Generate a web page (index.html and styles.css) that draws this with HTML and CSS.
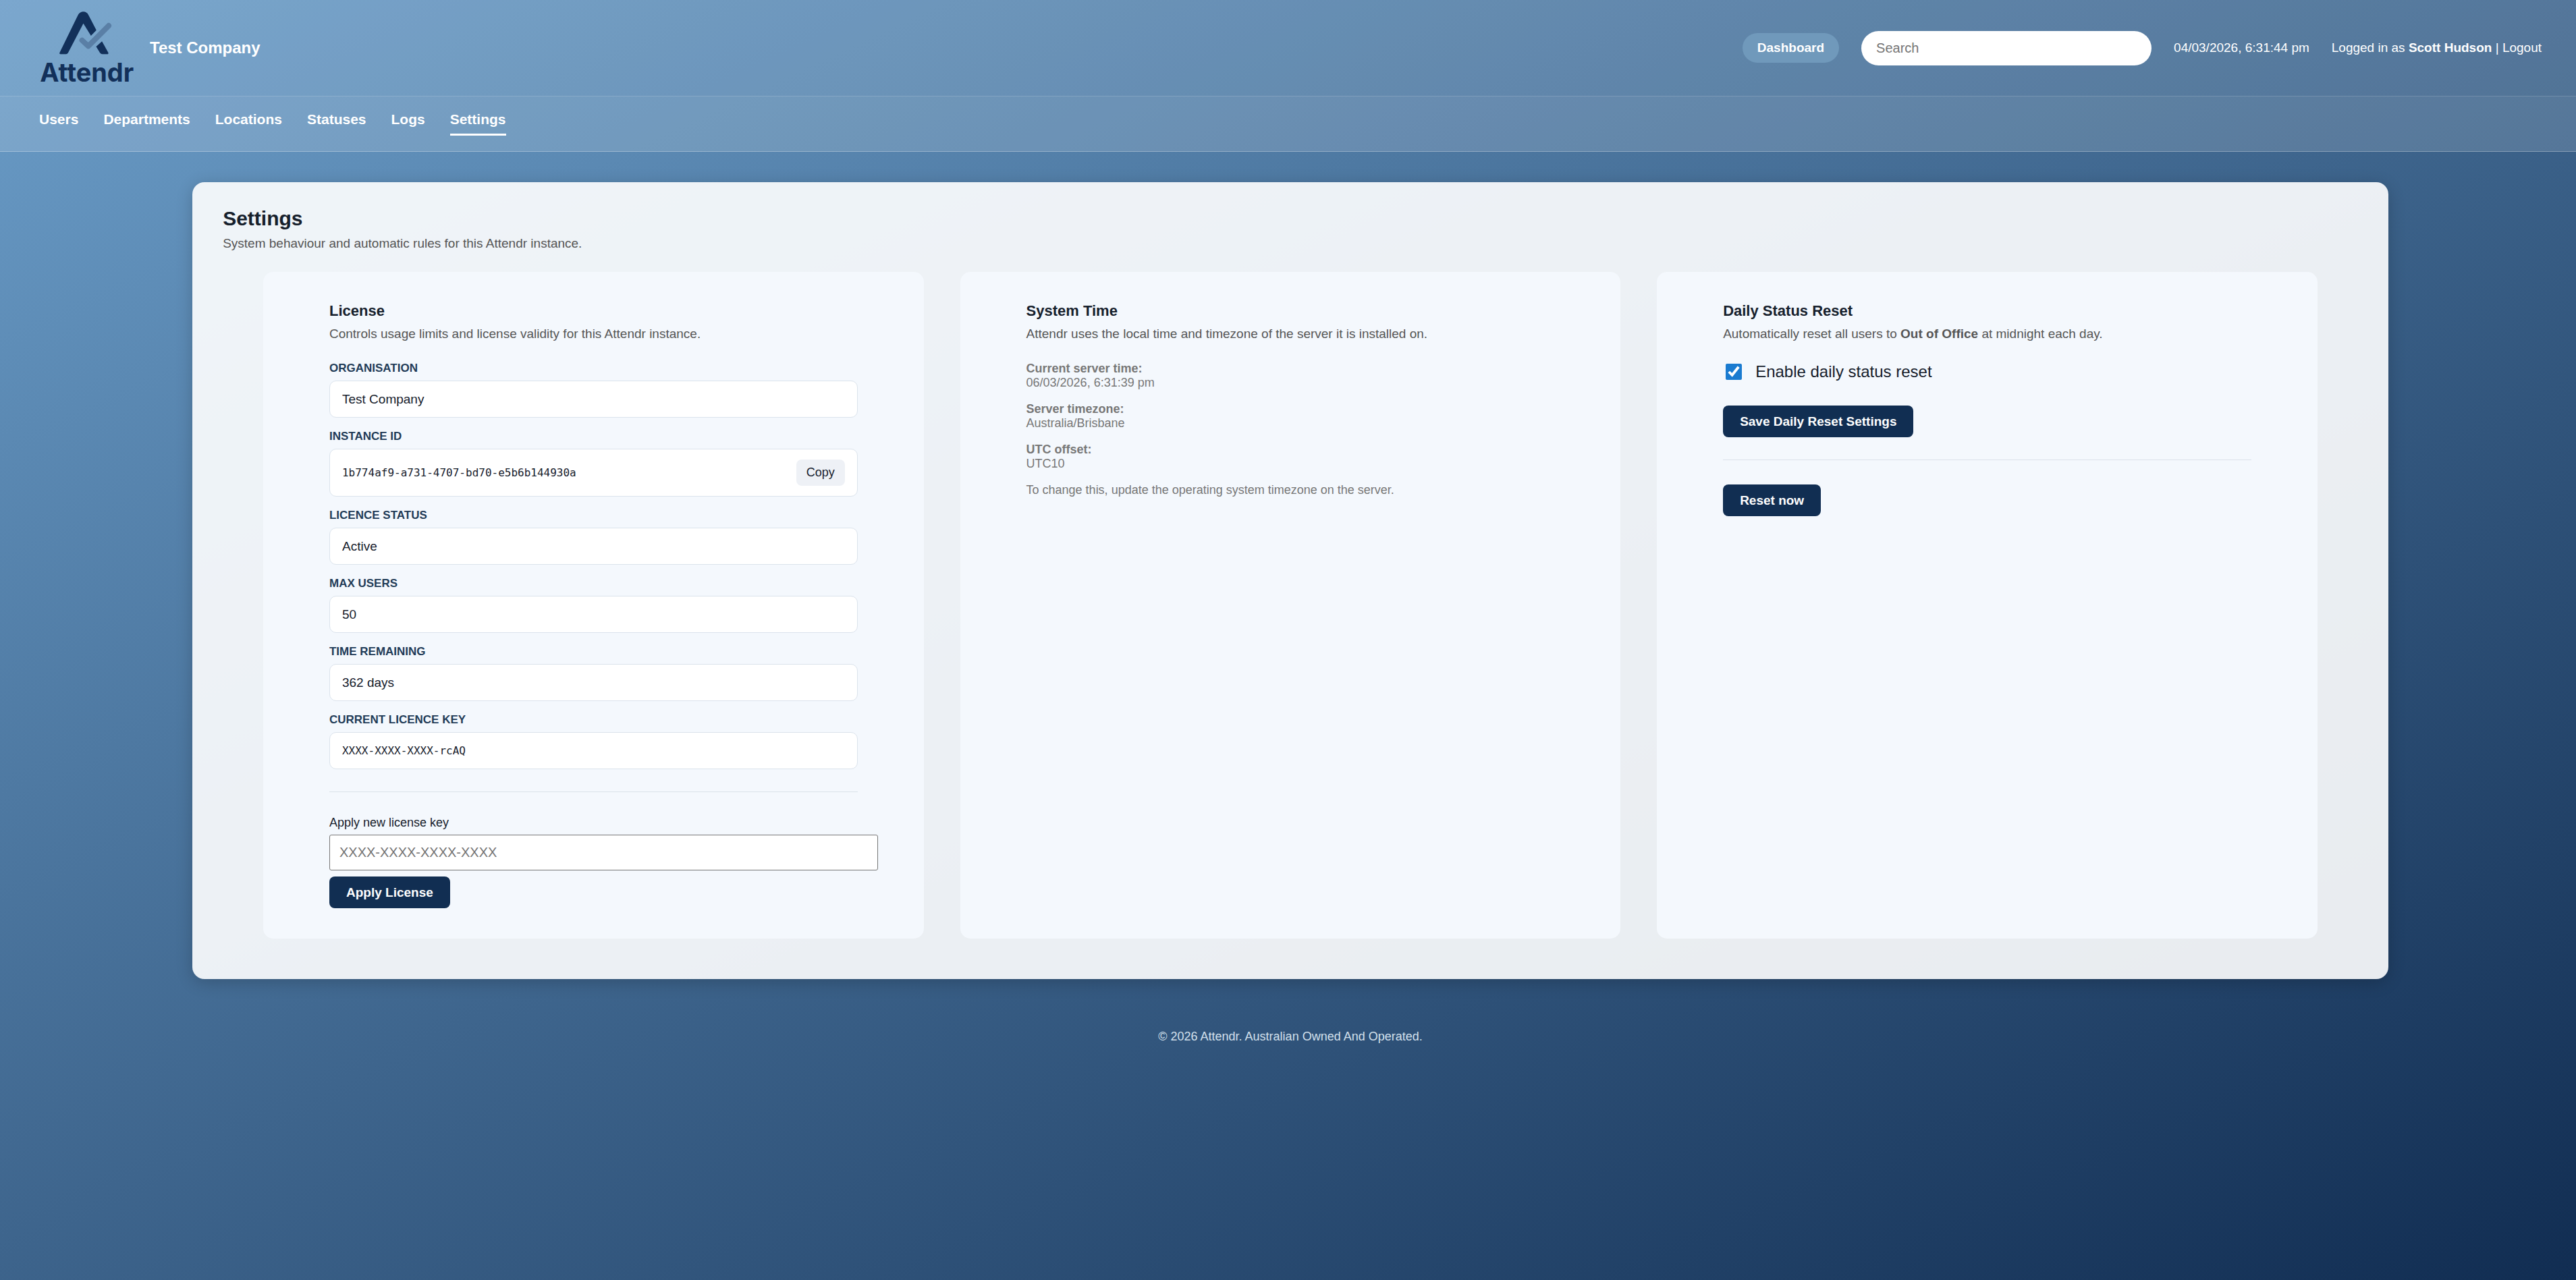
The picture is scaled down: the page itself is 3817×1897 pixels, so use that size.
FILE: index.html
```
<!DOCTYPE html>
<html lang="en">
<head>
    <meta charset="UTF-8">
    <meta name="viewport" content="width=device-width, initial-scale=1.0">
    <title>Attendr - Settings</title>
    <link rel="stylesheet" href="styles.css">
</head>
<body>
    <header class="site-header">
        <div class="topbar">
            <a class="brand" href="#" aria-label="Attendr">
                <svg class="logo" viewBox="60 50 415 324">
                    <path class="logo-dark" d="M149 240 Q143 240 145 234 L228 64 Q236 50 251 50 Q266 50 273 64 L309 133 L285 158 L251 103 L183 234 Q180 240 173 240 Z"/>
                    <path class="logo-dark" d="M308 206 L334 183 L362 233 Q364 240 357 240 L336 240 Q329 240 325 234 Z"/>
                    <path class="logo-check" d="M245 178 L273 204 L364 113"/>
                    <text class="logo-text" x="58" y="362">Attendr</text>
                </svg>
            </a>
            <span class="company">Test Company</span>
            <div class="topbar-right">
                <a class="pill" href="#">Dashboard</a>
                <input class="search" type="search" placeholder="Search" aria-label="Search">
                <span>04/03/2026, 6:31:44 pm</span>
                <span>Logged in as <strong>Scott Hudson</strong> | <a class="logout" href="#">Logout</a></span>
            </div>
        </div>
        <nav class="nav">
            <a href="#">Users</a>
            <a href="#">Departments</a>
            <a href="#">Locations</a>
            <a href="#">Statuses</a>
            <a href="#">Logs</a>
            <a href="#" class="active">Settings</a>
        </nav>
    </header>

    <div class="page">
        <main class="panel">
            <h1>Settings</h1>
            <p class="desc">System behaviour and automatic rules for this Attendr instance.</p>

            <div class="settings-grid">
                <section class="card">
                    <h2>License</h2>
                    <p class="desc">Controls usage limits and license validity for this Attendr instance.</p>

                    <dl class="fields">
                        <div>
                            <dt>ORGANISATION</dt>
                            <dd>Test Company</dd>
                        </div>
                        <div>
                            <dt>INSTANCE ID</dt>
                            <dd>
                                <code>1b774af9-a731-4707-bd70-e5b6b144930a</code>
                                <button type="button" class="copy">Copy</button>
                            </dd>
                        </div>
                        <div>
                            <dt>LICENCE STATUS</dt>
                            <dd>Active</dd>
                        </div>
                        <div>
                            <dt>MAX USERS</dt>
                            <dd>50</dd>
                        </div>
                        <div>
                            <dt>TIME REMAINING</dt>
                            <dd>362 days</dd>
                        </div>
                        <div>
                            <dt>CURRENT LICENCE KEY</dt>
                            <dd><code>XXXX-XXXX-XXXX-rcAQ</code></dd>
                        </div>
                    </dl>

                    <hr>

                    <form class="license-form">
                        <label for="licenseKey">Apply new license key</label>
                        <input type="text" id="licenseKey" placeholder="XXXX-XXXX-XXXX-XXXX">
                        <button type="submit" class="btn">Apply License</button>
                    </form>
                </section>

                <section class="card">
                    <h2>System Time</h2>
                    <p class="desc">Attendr uses the local time and timezone of the server it is installed on.</p>

                    <div class="info">
                        <p><strong>Current server time:</strong><br>06/03/2026, 6:31:39 pm</p>
                        <p><strong>Server timezone:</strong><br>Australia/Brisbane</p>
                        <p><strong>UTC offset:</strong><br>UTC10</p>
                        <p>To change this, update the operating system timezone on the server.</p>
                    </div>
                </section>

                <section class="card">
                    <h2>Daily Status Reset</h2>
                    <p class="desc">Automatically reset all users to <strong>Out of Office</strong> at midnight each day.</p>

                    <form>
                        <label class="check-row" for="dailyReset">
                            <input type="checkbox" id="dailyReset" checked>
                            Enable daily status reset
                        </label>
                        <button type="submit" class="btn">Save Daily Reset Settings</button>
                    </form>

                    <hr>

                    <button type="button" class="btn">Reset now</button>
                </section>
            </div>
        </main>

        <footer class="footer">&copy; 2026 Attendr. Australian Owned And Operated.</footer>
    </div>
</body>
</html>
```
FILE: styles.css
```
* {
    box-sizing: border-box;
}
body {
    margin: 0;
    min-height: 100vh;
    font-family: Arial, "Liberation Sans", sans-serif;
    font-size: 19px;
    line-height: 22px;
    color: #16202c;
    background: linear-gradient(155deg, #6b9dc8 0%, #112d52 100%);
}
h1, h2, p, dl, dd {
    margin: 0;
}
a {
    color: inherit;
    text-decoration: none;
}
button, input {
    font-family: inherit;
}

/* Header */
.site-header {
    background: rgba(255, 255, 255, 0.11);
    border-bottom: 1px solid rgba(255, 255, 255, 0.3);
    color: #fff;
}
.topbar {
    display: flex;
    align-items: center;
    height: 142px;
    padding: 0 51px 0 60px;
}
.logo {
    display: block;
    width: 138px;
    height: 108px;
    overflow: visible;
}
.logo-dark {
    fill: #12305a;
}
.logo-check {
    fill: none;
    stroke: #5a7fa6;
    stroke-width: 24;
    stroke-linecap: round;
    stroke-linejoin: round;
}
.logo-text {
    font-family: Inter, sans-serif;
    font-size: 114px;
    font-weight: 700;
    fill: #12305a;
}
.company {
    margin-left: 24px;
    font-size: 24px;
    line-height: 28px;
    font-weight: bold;
}
.topbar-right {
    display: flex;
    align-items: center;
    gap: 33px;
    margin-left: auto;
}
.pill {
    padding: 11px 22px;
    border-radius: 22px;
    background: #7099bb;
    font-weight: bold;
}
.search {
    width: 430px;
    height: 51px;
    padding: 0 22px;
    border: none;
    border-radius: 26px;
    background: #fff;
    font-size: 20px;
}
.nav {
    display: flex;
    gap: 37px;
    padding: 22px 58px 23px;
    border-top: 1px solid rgba(255, 255, 255, 0.15);
    background: rgba(255, 255, 255, 0.04);
}
.nav a {
    padding-bottom: 9px;
    border-bottom: 3px solid transparent;
    font-size: 21px;
    line-height: 24px;
    font-weight: bold;
}
.nav .active {
    border-bottom-color: #fff;
}

/* Page */
.page {
    padding: 45px 0 45px 7px;
}
.panel {
    width: 85.4%;
    margin: 0 auto;
    padding: 37px 45px 60px;
    border-radius: 18px;
    background: rgba(255, 255, 255, 0.9);
    box-shadow: 0 5px 25px rgba(0, 0, 0, 0.2);
}
h1 {
    margin-bottom: 9px;
    font-size: 30px;
    line-height: 34px;
}
h2 {
    margin-bottom: 11px;
    font-size: 22px;
    line-height: 25px;
}
.desc {
    color: #555;
}
.settings-grid {
    display: grid;
    grid-template-columns: repeat(3, 1fr);
    gap: 54px;
    padding: 31px 60px 0;
}
.card {
    padding: 45px 10%;
    border-radius: 15px;
    background: #f4f8fd;
}
.card .desc {
    margin-bottom: 30px;
}
hr {
    height: 1px;
    margin: 33px 0 36px;
    border: none;
    background: #dbe2ea;
}

/* License */
.fields {
    display: grid;
    gap: 18px;
}
.fields dt {
    margin-bottom: 8px;
    font-size: 17px;
    line-height: 20px;
    font-weight: bold;
    color: #1f3b57;
}
.fields dd {
    display: flex;
    align-items: center;
    justify-content: space-between;
    padding: 15px 18px;
    border: 1px solid #dbe3ec;
    border-radius: 10px;
    background: #fff;
    line-height: 23px;
}
code {
    font-family: "DejaVu Sans Mono", monospace;
    font-size: 16px;
}
.copy {
    padding: 9px 15px;
    border: none;
    border-radius: 8px;
    background: #eef1f6;
    color: #16202c;
    font-size: 18px;
    line-height: 21px;
}
.license-form label {
    display: block;
    font-size: 18px;
    line-height: 18px;
}
.license-form input {
    display: block;
    box-sizing: content-box;
    width: 100%;
    height: 51px;
    margin: 9px 0;
    padding: 0 14px;
    border: 1px solid #767676;
    border-radius: 3px;
    background: #fff;
    font-size: 20px;
}
.btn {
    display: block;
    padding: 12px 25px;
    border: none;
    border-radius: 8px;
    background: #112e52;
    color: #fff;
    font-size: 19px;
    line-height: 23px;
    font-weight: bold;
}

/* System time */
.info {
    display: grid;
    gap: 18px;
    font-size: 18px;
    line-height: 21px;
    color: #777;
}

/* Daily reset */
.check-row {
    display: flex;
    align-items: center;
    gap: 20px;
    margin-bottom: 35px;
    font-size: 24px;
    line-height: 30px;
}
.check-row input {
    width: 24px;
    height: 24px;
    margin: 0 0 0 4px;
    accent-color: #1a7bd0;
}

.footer {
    margin-top: 75px;
    text-align: center;
    font-size: 18px;
    line-height: 21px;
    color: #d3e0ec;
}
```
